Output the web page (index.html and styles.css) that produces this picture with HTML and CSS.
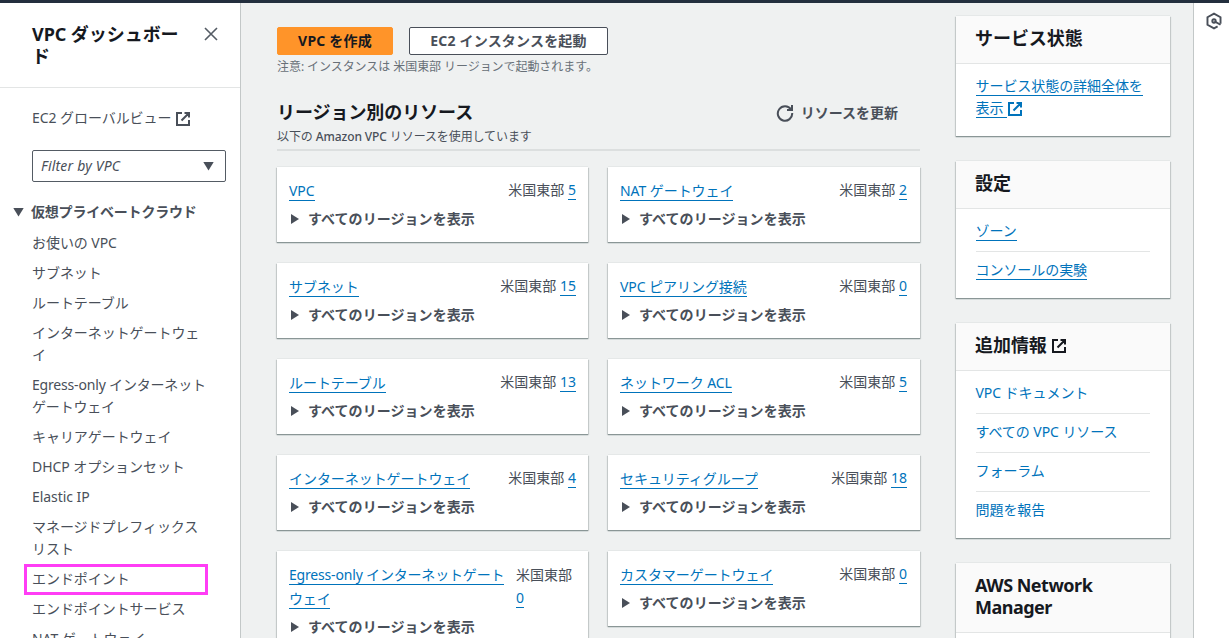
FILE: index.html
```html
<!DOCTYPE html>
<html lang="ja">
<head>
<meta charset="utf-8">
<title>VPC ダッシュボード</title>
<link rel="stylesheet" href="styles.css">
</head>
<body>
<svg class="defs">
    <symbol id="external" viewBox="0 0 16 16">
        <path d="M7 2H2v12h12V9M9.500 2H14v4.500M14 2L6.500 9.500" fill="none" stroke="currentColor" stroke-width="2"/>
    </symbol>
</svg>
<div class="topbar"></div>
<div id="wrap">
    <nav class="sidebar">
        <div class="side-head">
            <h2>VPC ダッシュボード</h2>
            <svg class="close" viewBox="0 0 14 14"><path d="M1 1l12 12M13 1L1 13"/></svg>
        </div>
        <div class="side-body">
            <a class="global">EC2 グローバルビュー <svg class="ext"><use href="#external"/></svg></a>
            <div class="select"><span>Filter by VPC</span><i class="down"></i></div>
            <h3><i class="down"></i>仮想プライベートクラウド</h3>
            <ul>
                <li>お使いの VPC</li>
                <li>サブネット</li>
                <li>ルートテーブル</li>
                <li>インターネットゲートウェイ</li>
                <li class="tight">Egress-only インターネットゲートウェイ</li>
                <li>キャリアゲートウェイ</li>
                <li>DHCP オプションセット</li>
                <li>Elastic IP</li>
                <li>マネージドプレフィックスリスト</li>
                <li class="marked">エンドポイント</li>
                <li>エンドポイントサービス</li>
                <li>NAT ゲートウェイ</li>
            </ul>
        </div>
    </nav>

    <main>
        <div class="buttons">
            <button class="btn primary">VPC を作成</button>
            <button class="btn">EC2 インスタンスを起動</button>
        </div>
        <p class="note">注意: インスタンスは 米国東部 リージョンで起動されます。</p>
        <div class="res-head">
            <div>
                <h1>リージョン別のリソース</h1>
                <p>以下の <b>Amazon VPC</b> リソースを使用しています</p>
            </div>
            <a class="refresh">
                <svg viewBox="0 0 18 18"><path d="M15 5.500A7.200 7.200 0 1 0 16.200 9M16 1v5h-5"/></svg>リソースを更新
            </a>
        </div>
        <div class="cards">
            <div class="card">
                <div class="row"><div class="name"><a>VPC</a></div><div class="count">米国東部 <a>5</a></div></div>
                <div class="more"><i></i>すべてのリージョンを表示</div>
            </div>
            <div class="card">
                <div class="row"><div class="name"><a>NAT ゲートウェイ</a></div><div class="count">米国東部 <a>2</a></div></div>
                <div class="more"><i></i>すべてのリージョンを表示</div>
            </div>
            <div class="card">
                <div class="row"><div class="name"><a>サブネット</a></div><div class="count">米国東部 <a>15</a></div></div>
                <div class="more"><i></i>すべてのリージョンを表示</div>
            </div>
            <div class="card">
                <div class="row"><div class="name"><a>VPC ピアリング接続</a></div><div class="count">米国東部 <a>0</a></div></div>
                <div class="more"><i></i>すべてのリージョンを表示</div>
            </div>
            <div class="card">
                <div class="row"><div class="name"><a>ルートテーブル</a></div><div class="count">米国東部 <a>13</a></div></div>
                <div class="more"><i></i>すべてのリージョンを表示</div>
            </div>
            <div class="card">
                <div class="row"><div class="name"><a>ネットワーク ACL</a></div><div class="count">米国東部 <a>5</a></div></div>
                <div class="more"><i></i>すべてのリージョンを表示</div>
            </div>
            <div class="card">
                <div class="row"><div class="name"><a>インターネットゲートウェイ</a></div><div class="count">米国東部 <a>4</a></div></div>
                <div class="more"><i></i>すべてのリージョンを表示</div>
            </div>
            <div class="card">
                <div class="row"><div class="name"><a>セキュリティグループ</a></div><div class="count">米国東部 <a>18</a></div></div>
                <div class="more"><i></i>すべてのリージョンを表示</div>
            </div>
            <div class="card long">
                <div class="row"><div class="name tight"><a>Egress-only インターネットゲートウェイ</a></div><div class="count">米国東部 <a>0</a></div></div>
                <div class="more"><i></i>すべてのリージョンを表示</div>
            </div>
            <div class="card">
                <div class="row"><div class="name"><a>カスタマーゲートウェイ</a></div><div class="count">米国東部 <a>0</a></div></div>
                <div class="more"><i></i>すべてのリージョンを表示</div>
            </div>
        </div>
    </main>

    <aside>
        <section class="panel">
            <h2>サービス状態</h2>
            <div class="panel-body"><a class="line">サービス状態の詳細全体を表示 </a><svg class="ext"><use href="#external"/></svg></div>
        </section>
        <section class="panel">
            <h2>設定</h2>
            <ul class="panel-body">
                <li><a class="line">ゾーン</a></li>
                <li><a class="line">コンソールの実験</a></li>
            </ul>
        </section>
        <section class="panel">
            <h2>追加情報 <svg class="ext"><use href="#external"/></svg></h2>
            <ul class="panel-body">
                <li><a>VPC ドキュメント</a></li>
                <li><a>すべての VPC リソース</a></li>
                <li><a>フォーラム</a></li>
                <li><a>問題を報告</a></li>
            </ul>
        </section>
        <section class="panel">
            <h2 class="latin">AWS Network Manager</h2>
            <div class="panel-body"></div>
        </section>
    </aside>

    <div class="rail">
        <svg viewBox="0 0 16 16"><path d="M13.800 10.500V4.700L8 1.400 2.200 4.700v6.600L8 14.600l3.200-1.800"/><circle cx="8" cy="8" r="1.500"/><path d="M8.500 8.300l5.300 3"/></svg>
    </div>
</div>
</body>
</html>
```
FILE: styles.css
```css
*,*:after{box-sizing: border-box;}
body,h1,h2,h3,p,ul{margin: 0;padding: 0;}
li{list-style: none;}
body{height: 638px;overflow: hidden;background: #eff1f1;color: #494f59;font: 14px/22px "Noto Sans","Noto Sans CJK JP",sans-serif;letter-spacing: -.06px;}
a{color: #0073bb;}
.tight{letter-spacing: -.18px;}
.defs{display: none;}
.ext{width: 16px;height: 16px;vertical-align: -4px;}
.topbar{height: 3px;background: #232f3e;}
#wrap{display: flex;height: 635px;}

.sidebar{flex: none;width: 241px;background: #fff;border-right: 1px solid #c3c8c8;overflow: hidden;}
.side-head{display: flex;justify-content: space-between;align-items: flex-start;padding: 20px 22px 20px 32px;border-bottom: 1px solid #e3e5e5;}
.side-head h2{width: 150px;font-size: 18px;line-height: 22px;color: #16191f;}
.close{width: 14px;height: 14px;margin-top: 4px;fill: none;stroke: #545b64;stroke-width: 1.600;}
.side-body{padding: 19px 14px 0 32px;}
.global{display: block;height: 22px;color: #494f59;}
.select{display: flex;justify-content: space-between;align-items: center;height: 32px;margin-top: 21px;padding: 0 11px 0 8px;border: 1px solid #545b64;border-radius: 2px;font-style: italic;letter-spacing: .2px;}
.down{flex: none;width: 11px;height: 9px;background: #494f59;clip-path: polygon(0 0,100% 0,50% 100%);}
.side-body h3{display: flex;align-items: center;margin: 19px 0 9px -19px;font-size: 14px;letter-spacing: -.2px;}
.side-body h3 .down{margin-right: 7px;}
.side-body li{position: relative;width: 180px;margin-bottom: 8px;}
.marked:after{content: "";position: absolute;left: -8px;top: -4px;width: 184px;height: 31px;border: 3px solid #ff3df5;}

main{flex: none;width: 643px;margin: 24px 0 0 36px;}
.buttons{display: flex;gap: 16px;}
.btn{width: 199px;height: 28px;padding: 0;border: 1px solid #494f59;border-radius: 2px;background: #fff;color: #494f59;font: bold 14px/22px "Noto Sans","Noto Sans CJK JP",sans-serif;letter-spacing: .2px;}
.primary{width: 116px;background: #ff9429;border-color: #ff9429;color: #16191f;}
.note{margin-top: 4px;font-size: 12px;line-height: 16px;color: #687078;}
.res-head{display: flex;justify-content: space-between;height: 76px;padding-top: 25px;border-bottom: 2px solid #dcdfdf;}
.res-head h1{font-size: 18px;line-height: 24px;color: #16191f;}
.res-head p{margin-top: 5px;font-size: 12px;line-height: 16px;letter-spacing: -.1px;}
.res-head b{font-weight: 500;}
.refresh{display: flex;align-items: center;gap: 7px;height: 25px;margin-right: 22px;color: #494f59;font-weight: bold;letter-spacing: 0;}
.refresh svg{width: 18px;height: 18px;fill: none;stroke: #494f59;stroke-width: 2;}
.cards{display: grid;grid-template-columns: 311px 312px;gap: 21px 20px;align-items: start;padding-top: 16px;}
.card{min-height: 75px;padding: 12px 12px 11px;}
.card,.panel{background: #fff;box-shadow: 0 1px 1px #8a9696,1px 1px 1px #d0d4d4,-1px 1px 1px #d0d4d4,0 -1px 0 #e5e8e8;}
.row{display: flex;justify-content: space-between;line-height: 24px;}
.row a,.line{border-bottom: 1px solid #0073bb;}
.count{flex: none;margin-top: -1px;letter-spacing: 0;}
.card:nth-child(even) .count{margin-right: 1px;}
.more{display: flex;align-items: center;height: 24px;margin-top: 4px;padding-left: 2px;font-weight: bold;letter-spacing: .05px;}
.more i{width: 8px;height: 10px;margin-right: 9px;background: #494f59;clip-path: polygon(0 0,100% 50%,0 100%);}
.long .name{width: 222px;}
.long .count{width: 60px;margin-top: 0;line-height: 23px;}

aside{flex: none;width: 214px;margin: 13px 0 0 36px;}
.panel{margin-bottom: 25px;}
.panel h2{padding: 11px 20px 14px 19px;background: #fafafa;border-bottom: 1px solid #e3e5e5;color: #16191f;font-size: 18px;line-height: 22px;}
.panel .latin{padding-right: 40px;letter-spacing: -.5px;}
.panel h2 .ext{vertical-align: -2px;}
.panel-body{padding: 11px 20px 17px 19.500px;}
.panel li{padding-bottom: 9px;border-bottom: 1px solid #e3e5e5;}
.panel li + li{padding-top: 7px;}
.panel li:last-child{padding-bottom: 0;border: 0;}
.panel .panel-body .ext{color: #0073bb;}

.rail{flex: 1;margin-left: 23px;padding: 9px 0 0 11px;background: #fff;border-left: 1px solid #c3c8c8;}
.rail svg{display: block;width: 18px;height: 18px;fill: none;stroke: #494f59;stroke-width: 1.700;}
```
